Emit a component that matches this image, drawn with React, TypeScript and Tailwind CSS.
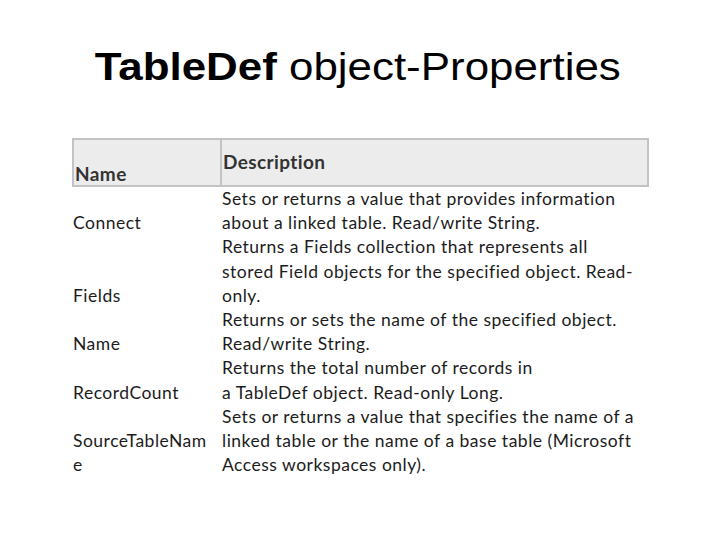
const rows: { name: string[]; desc: string[] }[] = [
  {
    name: ['Connect'],
    desc: ['Sets or returns a value that provides information', 'about a linked table. Read/write String.'],
  },
  {
    name: ['Fields'],
    desc: [
      'Returns a Fields collection that represents all',
      'stored Field objects for the specified object. Read-',
      'only.',
    ],
  },
  {
    name: ['Name'],
    desc: ['Returns or sets the name of the specified object.', 'Read/write String.'],
  },
  {
    name: ['RecordCount'],
    desc: ['Returns the total number of records in', 'a TableDef object. Read-only Long.'],
  },
  {
    name: ['SourceTableNam', 'e'],
    desc: [
      'Sets or returns a value that specifies the name of a',
      'linked table or the name of a base table (Microsoft',
      'Access workspaces only).',
    ],
  },
];

export default function App() {
  return (
    <div className="w-[720px] h-[540px] bg-white overflow-hidden">
      {/* Title, slightly stretched like the source slide */}
      <h1 className="pt-[45px] text-center text-[38px] leading-[44px] text-black font-['Liberation_Sans',Arial,sans-serif]">
        <span className="inline-block scale-x-[1.155] translate-x-[-2px]">
          <span className="font-bold">TableDef</span> object-Properties
        </span>
      </h1>

      {/* Table */}
      <div className="mt-[49px] ml-[72px] w-[577px] text-[17.5px] tracking-[0.5px] text-[#1c1c1c] font-['Lato','Open_Sans',sans-serif]">
        <div className="grid grid-cols-[148px_1fr] h-[49px] bg-[#ececec] border-2 border-[#c3c3c3] font-bold text-[19px] tracking-[0.4px] text-[#333]">
          <div className="flex items-end pl-[1px] pb-[1px] leading-[20px] border-r-2 border-[#c3c3c3]">Name</div>
          <div className="flex items-center pl-[1px]">Description</div>
        </div>
        {rows.map((r) => (
          <div key={r.name.join('')} className="grid grid-cols-[148px_1fr] leading-[24.2px]">
            <div className="flex flex-col justify-end pl-[1px]">
              {r.name.map((n) => (
                <span key={n} className="whitespace-nowrap">{n}</span>
              ))}
            </div>
            <div className="flex flex-col pl-[2px]">
              {r.desc.map((d) => (
                <span key={d} className="whitespace-nowrap">{d}</span>
              ))}
            </div>
          </div>
        ))}
      </div>
    </div>
  );
}
